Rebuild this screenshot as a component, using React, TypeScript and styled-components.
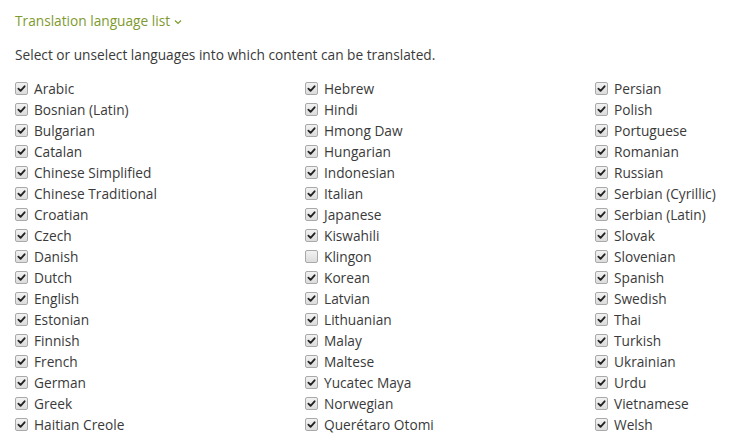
import React, { useState } from "react";
import styled, { createGlobalStyle } from "styled-components";

const GlobalStyle = createGlobalStyle`
  html, body {
    margin: 0;
    padding: 0;
    background: #ffffff;
  }
  body {
    font-family: "Open Sans", "Noto Sans", sans-serif;
    color: #3a3a3a;
  }
`;

const columns: string[][] = [
  [
    "Arabic",
    "Bosnian (Latin)",
    "Bulgarian",
    "Catalan",
    "Chinese Simplified",
    "Chinese Traditional",
    "Croatian",
    "Czech",
    "Danish",
    "Dutch",
    "English",
    "Estonian",
    "Finnish",
    "French",
    "German",
    "Greek",
    "Haitian Creole",
  ],
  [
    "Hebrew",
    "Hindi",
    "Hmong Daw",
    "Hungarian",
    "Indonesian",
    "Italian",
    "Japanese",
    "Kiswahili",
    "Klingon",
    "Korean",
    "Latvian",
    "Lithuanian",
    "Malay",
    "Maltese",
    "Yucatec Maya",
    "Norwegian",
    "Querétaro Otomi",
  ],
  [
    "Persian",
    "Polish",
    "Portuguese",
    "Romanian",
    "Russian",
    "Serbian (Cyrillic)",
    "Serbian (Latin)",
    "Slovak",
    "Slovenian",
    "Spanish",
    "Swedish",
    "Thai",
    "Turkish",
    "Ukrainian",
    "Urdu",
    "Vietnamese",
    "Welsh",
  ],
];

function App() {
  const [unchecked, setUnchecked] = useState<string[]>(["Klingon"]);

  // Flip one language on or off
  const toggle = (name: string) => {
    if (unchecked.includes(name)) {
      setUnchecked(unchecked.filter((item) => item !== name));
    } else {
      setUnchecked([...unchecked, name]);
    }
  };

  return (
    <Page>
      <GlobalStyle />
      <Title>
        Translation language list
        <Chevron viewBox="0 0 8 6">
          <path d="M1 1.5 L4 4.5 L7 1.5" />
        </Chevron>
      </Title>
      <Description>
        Select or unselect languages into which content can be translated.
      </Description>
      <Grid>
        {columns.map((column, index) => (
          <Column key={index}>
            {column.map((name) => {
              const checked = !unchecked.includes(name);
              return (
                <Row key={name} onClick={() => toggle(name)}>
                  <Box $checked={checked}>
                    {checked ? (
                      <svg viewBox="0 0 12 12">
                        <path d="M2.6 6.2 L5 8.6 L9.4 3.6" />
                      </svg>
                    ) : null}
                  </Box>
                  <Label>{name}</Label>
                </Row>
              );
            })}
          </Column>
        ))}
      </Grid>
    </Page>
  );
}

export default App;

const Page = styled.div`
  padding: 12px 15px 0 15px;
  width: 742px;
  height: 447px;
  box-sizing: border-box;
  overflow: hidden;
`;

const Title = styled.div`
  display: flex;
  align-items: center;
  gap: 4px;
  color: #7f9a2e;
  font-size: 13.7px;
  line-height: 18px;
`;

const Chevron = styled.svg`
  width: 8px;
  height: 6px;
  margin-top: 2px;

  path {
    fill: none;
    stroke: #7f9a2e;
    stroke-width: 1.2;
  }
`;

const Description = styled.p`
  margin: 16px 0 0 0;
  font-size: 13.7px;
  line-height: 18px;
  color: #3a3a3a;
`;

const Grid = styled.div`
  display: grid;
  grid-template-columns: 290px 290px 1fr;
  margin-top: 14px;
`;

const Column = styled.div`
  display: flex;
  flex-direction: column;
`;

const Row = styled.div`
  display: flex;
  align-items: center;
  height: 21px;
  cursor: pointer;
`;

const Box = styled.span<{ $checked: boolean }>`
  width: 11px;
  height: 11px;
  border: 1px solid #a9a9a9;
  border-radius: 2px;
  background: linear-gradient(#f2f2f2, #dcdcdc);
  margin-right: 6px;
  display: flex;
  flex-shrink: 0;

  svg {
    width: 11px;
    height: 11px;
  }

  path {
    fill: none;
    stroke: #222222;
    stroke-width: 2;
    stroke-linecap: round;
    stroke-linejoin: round;
  }
`;

const Label = styled.span`
  font-size: 13.7px;
  line-height: 18px;
  color: #3a3a3a;
`;
